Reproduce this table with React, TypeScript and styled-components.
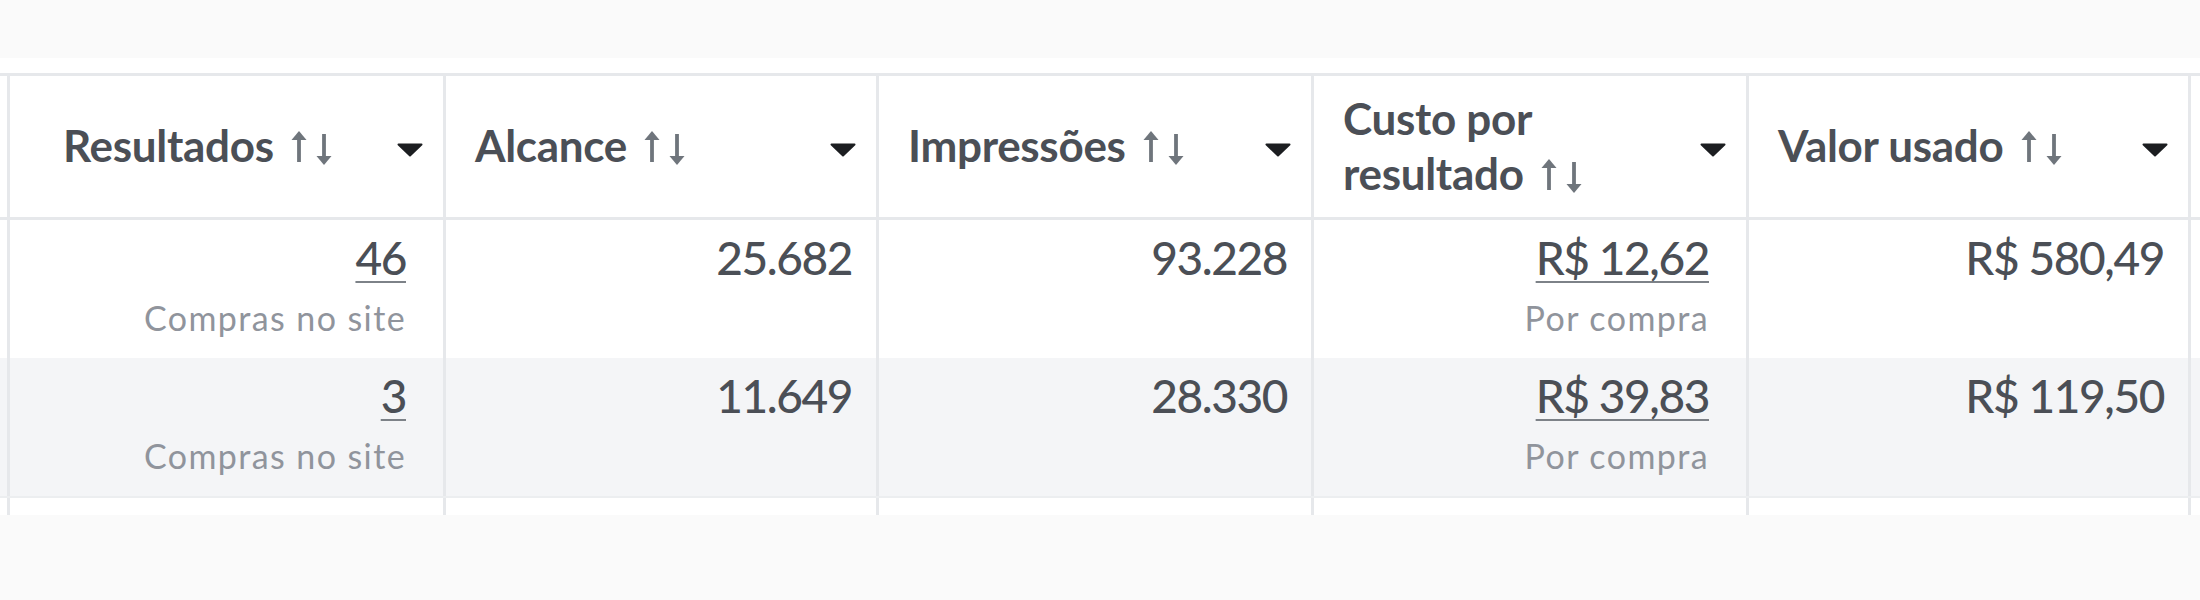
import React, { FC } from 'react'
import styled, { createGlobalStyle } from 'styled-components'

const GlobalStyle = createGlobalStyle`
  html, body {
    margin: 0;
    padding: 0;
    background: #fafafa;
    font-family: Lato, "Liberation Sans", sans-serif;
  }
`

const COLS = '7px 436px 433px 435px 435px 442px 1fr'

interface Column {
  key: string
  title: string
  first?: boolean
}

interface Cell {
  value: string
  sub?: string
  link?: boolean
}

const columns: Column[] = [
  { key: 'results', title: 'Resultados', first: true },
  { key: 'reach', title: 'Alcance' },
  { key: 'impressions', title: 'Impressões' },
  { key: 'cpr', title: 'Custo por resultado' },
  { key: 'spent', title: 'Valor usado' },
]

const rows: Cell[][] = [
  [
    { value: '46', sub: 'Compras no site', link: true },
    { value: '25.682' },
    { value: '93.228' },
    { value: 'R$ 12,62', sub: 'Por compra', link: true },
    { value: 'R$ 580,49' },
  ],
  [
    { value: '3', sub: 'Compras no site', link: true },
    { value: '11.649' },
    { value: '28.330' },
    { value: 'R$ 39,83', sub: 'Por compra', link: true },
    { value: 'R$ 119,50' },
  ],
]

const SortIcon = () => (
  <SortSvg viewBox="0 0 46 38" width="46" height="38">
    <path d="M9 7 V33" stroke="#6f757c" strokeWidth="3.8" />
    <path d="M1.5 11 L9 2 L16.5 11 Z" fill="#6f757c" />
    <path d="M34 5 V31" stroke="#6f757c" strokeWidth="3.8" />
    <path d="M26.5 27 L34 36 L41.5 27 Z" fill="#6f757c" />
  </SortSvg>
)

const Caret = () => (
  <CaretSvg viewBox="0 0 26 14" width="26" height="14">
    <path d="M1.5 1.5 H24.5 L13 12.5 Z" fill="#1c1e21" stroke="#1c1e21" strokeWidth="2" strokeLinejoin="round" />
  </CaretSvg>
)

const App: FC = () => {
  return (
    <>
      <GlobalStyle />
      <Page>
        <Sheet>
          <Table>
            <HeaderRow>
              <EdgeCell />
              {columns.map((col) => (
                <HeaderCell key={col.key} first={col.first}>
                  <HeaderLabel>
                    {col.title} <SortIcon />
                  </HeaderLabel>
                  <Caret />
                </HeaderCell>
              ))}
              <TailCell />
            </HeaderRow>
            {rows.map((row, i) => (
              <BodyRow key={i} shaded={i % 2 === 1}>
                <EdgeCell />
                {row.map((cell, j) => (
                  <DataCell key={j} link={cell.link}>
                    <Value link={cell.link}>{cell.value}</Value>
                    {cell.sub && <SubText>{cell.sub}</SubText>}
                  </DataCell>
                ))}
                <TailCell />
              </BodyRow>
            ))}
            <BodyRow>
              <EdgeCell />
              {columns.map((col) => (
                <DataCell key={col.key} />
              ))}
              <TailCell />
            </BodyRow>
          </Table>
        </Sheet>
      </Page>
    </>
  )
}

const Page = styled.div`
  width: 2200px;
  height: 600px;
  padding-top: 58px;
  box-sizing: border-box;
  background: #fafafa;
`

const Sheet = styled.div`
  background: #ffffff;
  height: 457px;
  padding-top: 15px;
  box-sizing: border-box;
  overflow: hidden;
`

const Table = styled.div`
  border-top: 3px solid #e6e8eb;
`

const HeaderRow = styled.div`
  display: grid;
  grid-template-columns: ${COLS};
  height: 141px;
  border-bottom: 3px solid #e6e8eb;
  box-sizing: content-box;
`

const BodyRow = styled.div<{ shaded?: boolean }>`
  display: grid;
  grid-template-columns: ${COLS};
  height: 138px;
  background: ${(p) => (p.shaded ? '#f4f5f7' : '#ffffff')};
  border-bottom: ${(p) => (p.shaded ? '2px solid #eceef0' : 'none')};
`

const EdgeCell = styled.div``

const TailCell = styled.div`
  border-left: 3px solid #e6e8eb;
`

const HeaderCell = styled.div<{ first?: boolean }>`
  display: flex;
  align-items: center;
  justify-content: space-between;
  border-left: 3px solid #e6e8eb;
  padding: 0 20px 2px ${(p) => (p.first ? '53px' : '29px')};
  box-sizing: border-box;
  min-width: 0;
`

const HeaderLabel = styled.div`
  max-width: 300px;
  font-size: 44px;
  line-height: 55px;
  font-weight: 700;
  letter-spacing: -0.3px;
  color: #4b4f56;
`

const SortSvg = styled.svg`
  display: inline-block;
  vertical-align: -5px;
  margin-left: 6px;
`

const CaretSvg = styled.svg`
  flex: none;
  margin-top: 8px;
`

const DataCell = styled.div<{ link?: boolean }>`
  display: flex;
  flex-direction: column;
  align-items: flex-end;
  border-left: 3px solid #e6e8eb;
  padding: 10px ${(p) => (p.link ? '37px' : '24px')} 0 0;
  box-sizing: border-box;
  min-width: 0;
`

const Value = styled.span<{ link?: boolean }>`
  font-size: 46px;
  line-height: 55px;
  font-weight: 500;
  color: #4b4f56;
  letter-spacing: -1.4px;
  text-decoration: ${(p) => (p.link ? 'underline' : 'none')};
  text-decoration-color: #7d8288;
  text-decoration-thickness: 2px;
  text-underline-offset: 6px;
`

const SubText = styled.span`
  margin-top: 13px;
  font-size: 34px;
  line-height: 40px;
  letter-spacing: 1.4px;
  color: #90949c;
`

export default App
